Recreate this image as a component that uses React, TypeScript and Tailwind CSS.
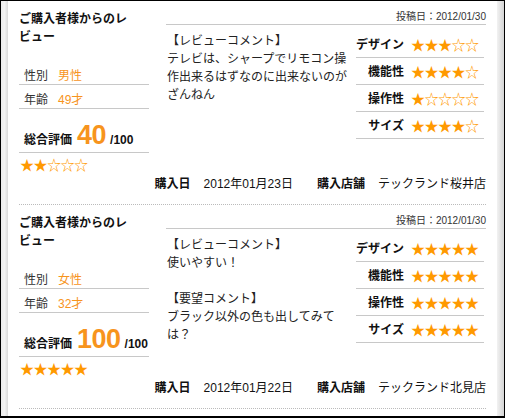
import React from "react";

type Comment = { title: string; body: string };
type Review = {
  postDate: string;
  gender: string;
  age: string;
  score: number;
  stars: number;
  comments: Comment[];
  ratings: number[];
  date: string;
  store: string;
};

const reviews: Review[] = [
  {
    postDate: "2012/01/30",
    gender: "男性",
    age: "49才",
    score: 40,
    stars: 2,
    comments: [
      { title: "【レビューコメント】", body: "テレビは、シャープでリモコン操作出来るはずなのに出来ないのがざんねん" },
    ],
    ratings: [3, 4, 1, 4],
    date: "2012年01月23日",
    store: "テックランド桜井店",
  },
  {
    postDate: "2012/01/30",
    gender: "女性",
    age: "32才",
    score: 100,
    stars: 5,
    comments: [
      { title: "【レビューコメント】", body: "使いやすい！" },
      { title: "【要望コメント】", body: "ブラック以外の色も出してみては？" },
    ],
    ratings: [5, 5, 5, 5],
    date: "2012年01月22日",
    store: "テックランド北見店",
  },
];

const labels = ["デザイン", "機能性", "操作性", "サイズ"];

function Stars({ n }: { n: number }) {
  return (
    <span className="font-['Noto_Sans_CJK_JP',sans-serif] text-[14px] leading-[16px] tracking-[-0.5px] text-[#ff9900]">
      {"★".repeat(n) + "☆".repeat(5 - n)}
    </span>
  );
}

function ReviewBlock({ r }: { r: Review }) {
  return (
    <div className="border-b border-dotted border-[#bbbbbb] pt-[9px] pb-[11px]">
      <div className="flex items-start">
        {/* left: reviewer */}
        <div className="w-[130px] shrink-0">
          <h2 className="w-[118px] text-[12px] leading-[18px] font-bold text-[#111]">ご購入者様からのレビュー</h2>
          <div className="mt-[15px] flex h-[24px] items-end border-b border-[#c8c8c8] pb-[1px] pl-[5px] text-[12px] leading-[14px]">
            <span className="w-[34px] text-[#333]">性別</span>
            <span className="text-[#f7941d]">{r.gender}</span>
          </div>
          <div className="flex h-[24px] items-end border-b border-[#c8c8c8] pb-[1px] pl-[5px] text-[12px] leading-[14px]">
            <span className="w-[34px] text-[#333]">年齢</span>
            <span className="text-[#f7941d]">{r.age}</span>
          </div>
          <div className="flex h-[44px] items-end overflow-visible border-b border-[#c8c8c8] pb-[3px] pl-[5px]">
            <div className="flex items-baseline whitespace-nowrap">
              <span className="shrink-0 text-[12px] font-bold text-[#111]">総合評価</span>
              <span className="ml-[5px] shrink-0 text-[27px] leading-[28px] font-bold tracking-[-0.5px] text-[#f7941d]">{r.score}</span>
              <span className="ml-[4px] shrink-0 text-[12px] font-bold text-[#111]">/100</span>
            </div>
          </div>
          <div className="mt-[3px] pl-[1px] leading-[16px]">
            <Stars n={r.stars} />
          </div>
        </div>

        {/* right: comments + ratings */}
        <div className="ml-[17px] w-[320px]">
          <div className="border-b border-[#c8c8c8] pt-[1px] pb-[1px] text-right text-[10px] leading-[12px] text-[#333]">
            投稿日：{r.postDate}
          </div>
          <div className="flex">
            <div className="w-[190px] pl-[1px] pt-[7px] text-[12px] leading-[18px] text-[#222]">
              {r.comments.map((c, i) => (
                <div key={i} className={i > 0 ? "mt-[18px]" : ""}>
                  <div>{c.title}</div>
                  <div>{c.body}</div>
                </div>
              ))}
            </div>
            <div className="w-[128px] pt-[6px]">
              {labels.map((l, i) => (
                <div key={l} className="flex h-[27px] items-center border-b border-[#c8c8c8] pt-[1px]">
                  <span className="w-[48px] text-right text-[12px] font-bold text-[#111]">{l}</span>
                  <span className="ml-[7px] leading-[16px]">
                    <Stars n={r.ratings[i]} />
                  </span>
                </div>
              ))}
            </div>
          </div>
        </div>
      </div>

      <div className="mt-[2px] flex justify-end text-[12px] leading-[18px] text-[#111]">
        <span className="mr-[13px] font-bold">購入日</span>
        <span className="mr-[24px]">{r.date}</span>
        <span className="mr-[13px] font-bold">購入店舗</span>
        <span>{r.store}</span>
      </div>
    </div>
  );
}

export default function App() {
  return (
    <div className="flex h-[418px] w-[505px] border border-b-2 border-black bg-white font-['Liberation_Sans','Noto_Sans_CJK_JP',sans-serif]">
      <div className="w-[7px] shrink-0 bg-gradient-to-r from-[#ececec] via-[#f3f3f3] to-[#dadada]" />
      <div className="flex-1 px-[11px]">
        {reviews.map((r, i) => (
          <ReviewBlock key={i} r={r} />
        ))}
      </div>
      <div className="w-[7px] shrink-0 bg-gradient-to-r from-[#f2f2f2] to-[#d4d4d4]" />
    </div>
  );
}
